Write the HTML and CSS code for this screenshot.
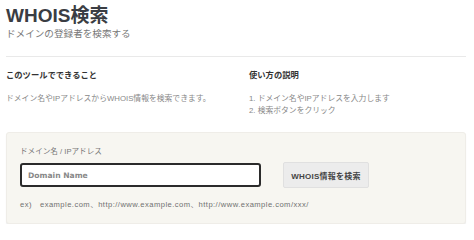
FILE: index.html
```html
<!DOCTYPE html>
<html lang="ja">
<head>
<meta charset="utf-8">
<title>WHOIS検索</title>
<link rel="stylesheet" href="styles.css">
</head>
<body>
<div class="page">
  <header class="head">
    <h1 class="title">WHOIS検索</h1>
    <p class="subtitle">ドメインの登録者を検索する</p>
  </header>
  <div class="info">
    <section class="col">
      <h2 class="col-title">このツールでできること</h2>
      <p class="col-text">ドメイン名やIPアドレスからWHOIS情報を検索できます。</p>
    </section>
    <section class="col">
      <h2 class="col-title">使い方の説明</h2>
      <ol class="steps">
        <li>1. ドメイン名やIPアドレスを入力します</li>
        <li>2. 検索ボタンをクリック</li>
      </ol>
    </section>
  </div>
  <form class="box">
    <label class="label" for="domain">ドメイン名 / IPアドレス</label>
    <div class="row">
      <input id="domain" class="input" type="text" placeholder="Domain Name">
      <button class="btn" type="button">WHOIS情報を検索</button>
    </div>
    <p class="example">ex)　example.com、http://www.example.com、http://www.example.com/xxx/</p>
  </form>
</div>
</body>
</html>
```
FILE: styles.css
```css
* { box-sizing: border-box; }
html, body { margin: 0; padding: 0; background: #ffffff; }
body {
  font-family: "Liberation Sans", "Noto Sans CJK JP", sans-serif;
  color: #555;
}
.page { padding: 0 8px 0 6px; }
.head {
  padding-top: 5px;
  padding-bottom: 16px;
  border-bottom: 1px solid #e9e9e9;
}
.title {
  margin: 0;
  font-size: 19px;
  line-height: 22px;
  font-weight: bold;
  color: #3a3d43;
}
.subtitle {
  margin: 0;
  font-size: 9.6px;
  line-height: 13px;
  color: #777;
}
.info {
  display: grid;
  grid-template-columns: 243px 1fr;
  padding-top: 12px;
  height: 75px;
}
.col-title {
  margin: 0;
  font-size: 8.3px;
  line-height: 12px;
  font-weight: bold;
  color: #333;
}
.col-text, .steps {
  margin: 12px 0 0;
  font-size: 7.8px;
  line-height: 12px;
  color: #888;
}
.steps { padding: 0; list-style: none; }
.box {
  margin: 0;
  background: #f7f6f1;
  border: 1px solid #efede8;
  border-radius: 3px;
  box-shadow: 0 1px 1px rgba(0,0,0,0.08);
  padding: 13px 13px 12px;
  height: 92px;
}
.label {
  display: block;
  font-size: 7.6px;
  line-height: 12px;
  color: #777;
}
.row {
  display: flex;
  align-items: center;
  gap: 22px;
  margin-top: 4px;
}
.input {
  width: 241px;
  height: 24px;
  border: 2px solid #2b2b2b;
  border-radius: 3px;
  background: #fff;
  padding: 0 6px;
  font-family: "DejaVu Sans", sans-serif;
  font-size: 7.6px;
  outline: none;
}
.input::placeholder { color: #888; font-weight: bold; }
.btn {
  width: 86px;
  height: 26px;
  background: #ececec;
  border: 1px solid #e0e0e0;
  border-radius: 2px;
  font-family: "Liberation Sans", "Noto Sans CJK JP", sans-serif;
  font-size: 8px;
  font-weight: bold;
  color: #444;
  letter-spacing: 0.03em;
  padding: 0;
}
.example {
  margin: 11px 0 0;
  font-size: 7.6px;
  line-height: 12px;
  color: #707070;
  letter-spacing: 0.06em;
}
```
